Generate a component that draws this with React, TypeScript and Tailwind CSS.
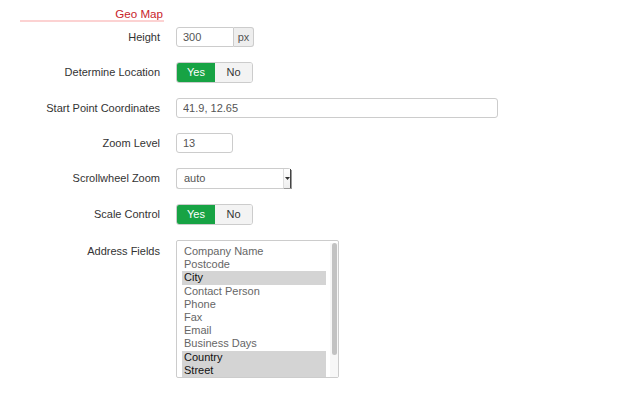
const fields = [
  { label: "Company Name", on: false },
  { label: "Postcode", on: false },
  { label: "City", on: true },
  { label: "Contact Person", on: false },
  { label: "Phone", on: false },
  { label: "Fax", on: false },
  { label: "Email", on: false },
  { label: "Business Days", on: false },
  { label: "Country", on: true },
  { label: "Street", on: true },
];

export default function App() {
  return (
    <div className="h-[394px] w-[636px] bg-white font-['Liberation_Sans',Arial,sans-serif] text-[11px] text-[#333]">
      {/* legend */}
      <div className="ml-[20px] w-[144px] border-b-2 border-[#fcd2d2] pt-[7px] text-right text-[11.6px] leading-[13px] text-[#c8232b]">
        <span className="pr-[1px]">Geo Map</span>
      </div>

      <div className="mt-[5px] flex flex-col gap-[15px]">
        <Row label="Height" h="h-[20px]">
          <div className="flex h-[20px]">
            <input
              readOnly
              value="300"
              className="h-[20px] w-[58px] rounded-l-[3px] border border-[#ccc] px-[6px] text-[11px] text-[#555] outline-none"
            />
            <span className="flex h-[20px] w-[20px] items-center justify-center rounded-r-[3px] border border-l-0 border-[#ccc] bg-[#eee] text-[#555]">
              px
            </span>
          </div>
        </Row>

        <Row label="Determine Location" h="h-[21px]">
          <Toggle />
        </Row>

        <Row label="Start Point Coordinates" h="h-[20px]">
          <input
            readOnly
            value="41.9, 12.65"
            className="h-[20px] w-[322px] rounded-[3px] border border-[#ccc] px-[6px] text-[11px] text-[#555] outline-none"
          />
        </Row>

        <Row label="Zoom Level" h="h-[20px]">
          <input
            readOnly
            value="13"
            className="h-[20px] w-[57px] rounded-[3px] border border-[#ccc] px-[6px] text-[11px] text-[#555] outline-none"
          />
        </Row>

        <Row label="Scrollwheel Zoom" h="h-[21px]">
          <div className="flex h-[21px] w-[115px] items-stretch rounded-[3px] border border-r-0 border-[#ccc]">
            <span className="flex flex-1 items-center pl-[7px] text-[#555]">auto</span>
            <span className="flex w-[8px] items-center justify-center border-l border-[#ddd] border-r border-r-[#444] bg-[linear-gradient(180deg,#fff,#eee)] shadow-[1px_1px_0_#999]">
              <svg width="5" height="3" viewBox="0 0 5 3" aria-hidden="true">
                <path d="M0 0H5L2.5 3Z" fill="#333" />
              </svg>
            </span>
          </div>
        </Row>

        <Row label="Scale Control" h="h-[21px]">
          <Toggle />
        </Row>

        <div className="flex items-start">
          <div className="w-[160px] pt-[5px] text-right leading-[13px]">Address Fields</div>
          <div className="ml-[16px] flex h-[138px] w-[163px] rounded-[2px] border border-[#ccc] pl-[5px] pt-[4px]">
            <div className="flex w-[145px] flex-col">
              {fields.map((f) => (
                <div
                  key={f.label}
                  className={
                    f.on
                      ? "h-[13.2px] bg-[#d4d4d4] pl-[2px] leading-[13px] text-[#111]"
                      : "h-[13.2px] pl-[2px] leading-[13px] text-[#666]"
                  }
                >
                  {f.label}
                </div>
              ))}
            </div>
            {/* scrollbar */}
            <div className="ml-[4px] -mt-[2px] flex w-[8px] justify-center bg-[#f7f7f7]">
              <div className="h-[112px] w-[5px] rounded-[3px] bg-[#c2c2c2]" />
            </div>
          </div>
        </div>
      </div>
    </div>
  );
}

function Row({ label, h, children }: { label: string; h: string; children: React.ReactNode }) {
  return (
    <div className={`flex items-center ${h}`}>
      <div className="w-[160px] text-right leading-[13px]">{label}</div>
      <div className="ml-[16px]">{children}</div>
    </div>
  );
}

function Toggle() {
  return (
    <div className="flex h-[21px] overflow-hidden rounded-[3px] border border-[#ccc]">
      <span className="flex w-[38px] items-center justify-center bg-[#17a344] text-white">Yes</span>
      <span className="flex w-[37px] items-center justify-center bg-[#f3f3f3] text-[#333]">No</span>
    </div>
  );
}
